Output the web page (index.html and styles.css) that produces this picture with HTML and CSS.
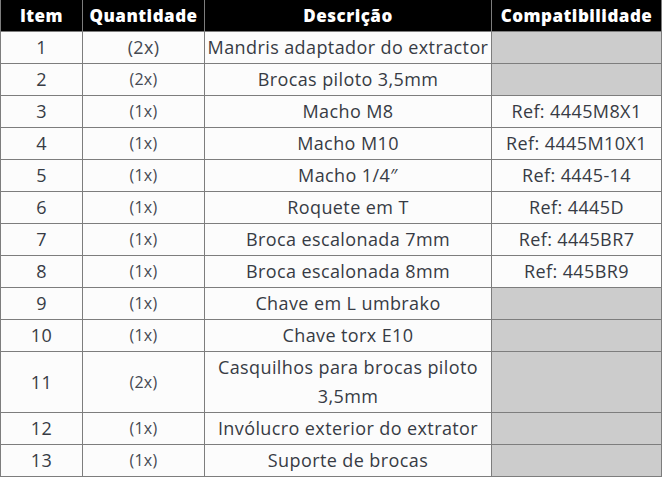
FILE: index.html
```html
<!DOCTYPE html>
<html lang="pt">
<head>
<meta charset="utf-8">
<link rel="stylesheet" href="styles.css">
</head>
<body>
<div class="wrap">
<table class="parts">
  <colgroup>
    <col class="c-item"><col class="c-qty"><col class="c-desc"><col class="c-comp">
  </colgroup>
  <thead>
    <tr><th>Item</th><th>Quantidade</th><th>Descrição</th><th>Compatibilidade</th></tr>
  </thead>
  <tbody>
    <tr><td>1</td><td class="qty big">(2x)</td><td>Mandris adaptador do extractor</td><td class="na"></td></tr>
    <tr><td>2</td><td class="qty">(2x)</td><td>Brocas piloto 3,5mm</td><td class="na"></td></tr>
    <tr><td>3</td><td class="qty">(1x)</td><td>Macho M8</td><td>Ref: 4445M8X1</td></tr>
    <tr><td>4</td><td class="qty">(1x)</td><td>Macho M10</td><td>Ref: 4445M10X1</td></tr>
    <tr><td>5</td><td class="qty">(1x)</td><td>Macho 1/4″</td><td>Ref: 4445-14</td></tr>
    <tr><td>6</td><td class="qty">(1x)</td><td>Roquete em T</td><td>Ref: 4445D</td></tr>
    <tr><td>7</td><td class="qty">(1x)</td><td>Broca escalonada 7mm</td><td>Ref: 4445BR7</td></tr>
    <tr><td>8</td><td class="qty">(1x)</td><td>Broca escalonada 8mm</td><td>Ref: 445BR9</td></tr>
    <tr><td>9</td><td class="qty">(1x)</td><td>Chave em L umbrako</td><td class="na"></td></tr>
    <tr><td>10</td><td class="qty">(1x)</td><td>Chave torx E10</td><td class="na"></td></tr>
    <tr class="tall"><td>11</td><td class="qty">(2x)</td><td>Casquilhos para brocas piloto 3,5mm</td><td class="na"></td></tr>
    <tr><td>12</td><td class="qty">(1x)</td><td>Invólucro exterior do extrator</td><td class="na"></td></tr>
    <tr><td>13</td><td class="qty">(1x)</td><td>Suporte de brocas</td><td class="na"></td></tr>
  </tbody>
</table>
</div>
</body>
</html>
```
FILE: styles.css
```css
html, body {
  margin: 0;
  padding: 0;
  background: #ffffff;
}
.wrap {
  width: 661px;
  border-right: 1px solid #1e1e1e;
  border-bottom: 2px solid #1e1e1e;
}
.parts {
  width: 661px;
  border-collapse: collapse;
  table-layout: fixed;
  font-family: "Open Sans", "DejaVu Sans", sans-serif;
  color: #373b44;
}
.c-item { width: 82px; }
.c-qty { width: 122px; }
.c-desc { width: 287px; }
.c-comp { width: 170px; }
.parts th {
  background: #000000;
  color: #ffffff;
  font-weight: 800;
  font-size: 17px;
  letter-spacing: 0.5px;
  height: 31px;
  padding: 0;
  border: 1px solid #7d7d7d;
  border-top: none;
  line-height: 20px;
}
.parts td {
  background: #fcfcfc;
  font-size: 18px;
  letter-spacing: 0.4px;
  text-align: center;
  border: 1px solid #7d7d7d;
  height: 31px;
  padding: 0;
  line-height: 29px;
  overflow: hidden;
  white-space: nowrap;
}
.parts td.qty { font-size: 16px; letter-spacing: 0.3px; color: #454952; }
.parts td.big { font-size: 18px; }
.parts tr.tall td { white-space: normal; height: 60px; }
.parts td.na { background: #cccccc; }
```
